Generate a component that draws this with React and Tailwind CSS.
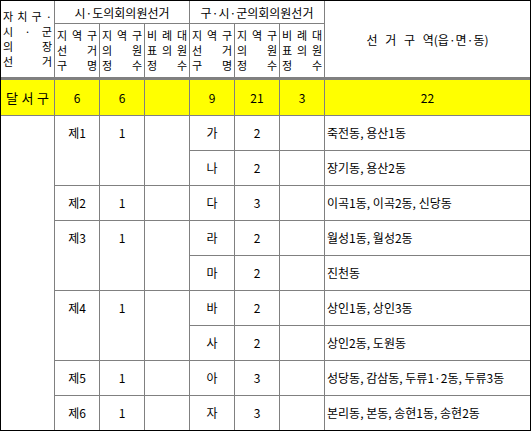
import * as React from "react";

// 그리드 선 색상
const line = "border-[#808080]";

// 글자를 칸 너비에 맞춰 균등 배치 (배분 정렬)
const Spread = ({ text, className = "" }) => (
    <div className={`flex justify-between ${className}`}>
        {[...text].map((ch, i) => (
            <span key={i}>{ch}</span>
        ))}
    </div>
);

// 세 줄짜리 소제목 (지역구선거구명 등)
const SubHead = ({ lines }) => (
    <div className="flex flex-col px-[2px] text-[11px]">
        {lines.map((l, i) => (
            <Spread key={i} text={l} />
        ))}
    </div>
);

const rows = [
    { g: "제1", n: "1", span: 2, d: "가", c: "2", area: "죽전동, 용산1동" },
    { d: "나", c: "2", area: "장기동, 용산2동" },
    { g: "제2", n: "1", span: 1, d: "다", c: "3", area: "이곡1동, 이곡2동, 신당동" },
    { g: "제3", n: "1", span: 2, d: "라", c: "2", area: "월성1동, 월성2동" },
    { d: "마", c: "2", area: "진천동" },
    { g: "제4", n: "1", span: 2, d: "바", c: "2", area: "상인1동, 상인3동" },
    { d: "사", c: "2", area: "상인2동, 도원동" },
    { g: "제5", n: "1", span: 1, d: "아", c: "3", area: "성당동, 감삼동, 두류1·2동, 두류3동" },
    { g: "제6", n: "1", span: 1, d: "자", c: "3", area: "본리동, 본동, 송현1동, 송현2동" },
];

export default function App() {
    const last = rows.length - 1;

    return (
        <div className="bg-white w-[532px] h-[432px] font-['Noto_Sans_CJK_KR',sans-serif] text-[12px] leading-[15px] text-black">
            <div className="w-[531px] border border-black">
                <table className="table-fixed border-separate border-spacing-0 w-[529px]">
                    <colgroup>
                        <col className="w-[54px]" />
                        <col className="w-[45px]" />
                        <col className="w-[45px]" />
                        <col className="w-[45px]" />
                        <col className="w-[45px]" />
                        <col className="w-[45px]" />
                        <col className="w-[45px]" />
                        <col className="w-[205px]" />
                    </colgroup>
                    <thead>
                        <tr>
                            <td
                                rowSpan={2}
                                className={`border-r border-b-[3px] ${line} p-0 align-middle`}
                            >
                                <div className="flex flex-col px-[2px] text-[11px]">
                                    <Spread text="자치구·" />
                                    <Spread text="시·군" />
                                    <Spread text="의장" />
                                    <Spread text="선거" />
                                </div>
                            </td>
                            <td colSpan={3} className={`h-[23px] border-r border-b ${line} p-0 text-center align-middle`}>
                                시·도의회의원선거
                            </td>
                            <td colSpan={3} className={`h-[23px] border-r border-b ${line} p-0 text-center align-middle`}>
                                구·시·군의회의원선거
                            </td>
                            <td rowSpan={2} className={`border-b-[3px] ${line} p-0 text-center align-middle [word-spacing:5px]`}>
                                선 거 구 역(읍·면·동)
                            </td>
                        </tr>
                        <tr>
                            {[0, 1].map((k) => (
                                <React.Fragment key={k}>
                                    <td className={`h-[56px] border-r border-b-[3px] ${line} p-0 align-middle`}>
                                        <SubHead lines={["지역구", "선거", "구명"]} />
                                    </td>
                                    <td className={`h-[56px] border-r border-b-[3px] ${line} p-0 align-middle`}>
                                        <SubHead lines={["지역구", "의원", "정수"]} />
                                    </td>
                                    <td className={`h-[56px] border-r border-b-[3px] ${line} p-0 align-middle`}>
                                        <SubHead lines={["비례대", "표의원", "정수"]} />
                                    </td>
                                </React.Fragment>
                            ))}
                        </tr>
                    </thead>
                    <tbody>
                        {/* 합계 행 (노란색) */}
                        <tr className="bg-[#ffff00]">
                            <td className={`h-[36px] border-r border-b ${line} p-0 align-middle`}>
                                <Spread text="달서구" className="px-[5px] text-[13px]" />
                            </td>
                            <td className={`border-r border-b ${line} p-0 text-center align-middle`}>6</td>
                            <td className={`border-r border-b ${line} p-0 text-center align-middle`}>6</td>
                            <td className={`border-r border-b ${line} p-0`}></td>
                            <td className={`border-r border-b ${line} p-0 text-center align-middle`}>9</td>
                            <td className={`border-r border-b ${line} p-0 text-center align-middle`}>21</td>
                            <td className={`border-r border-b ${line} p-0 text-center align-middle`}>3</td>
                            <td className={`border-b ${line} p-0 text-center align-middle`}>22</td>
                        </tr>

                        {rows.map((r, i) => {
                            const endB = i === last ? "" : "border-b";
                            const groupEnd = r.span && i + r.span - 1 === last ? "" : "border-b";
                            return (
                                <tr key={i}>
                                    {i === 0 && (
                                        <td rowSpan={rows.length} className={`border-r ${line} p-0`}></td>
                                    )}
                                    {r.g && (
                                        <>
                                            <td rowSpan={r.span} className={`border-r ${groupEnd} ${line} p-0 pt-[9px] text-center align-top`}>
                                                {r.g}
                                            </td>
                                            <td rowSpan={r.span} className={`border-r ${groupEnd} ${line} p-0 pt-[9px] text-center align-top`}>
                                                {r.n}
                                            </td>
                                            <td rowSpan={r.span} className={`border-r ${groupEnd} ${line} p-0`}></td>
                                        </>
                                    )}
                                    <td className={`${i === last ? "h-[34px]" : "h-[35px]"} border-r ${endB} ${line} p-0 pt-[9px] text-center align-top`}>
                                        {r.d}
                                    </td>
                                    <td className={`border-r ${endB} ${line} p-0 pt-[9px] text-center align-top`}>
                                        {r.c}
                                    </td>
                                    <td className={`border-r ${endB} ${line} p-0`}></td>
                                    <td className={`${endB} ${line} p-0 pt-[9px] pl-[2px] text-left align-top whitespace-nowrap`}>
                                        {r.area}
                                    </td>
                                </tr>
                            );
                        })}
                    </tbody>
                </table>
            </div>
        </div>
    );
}
